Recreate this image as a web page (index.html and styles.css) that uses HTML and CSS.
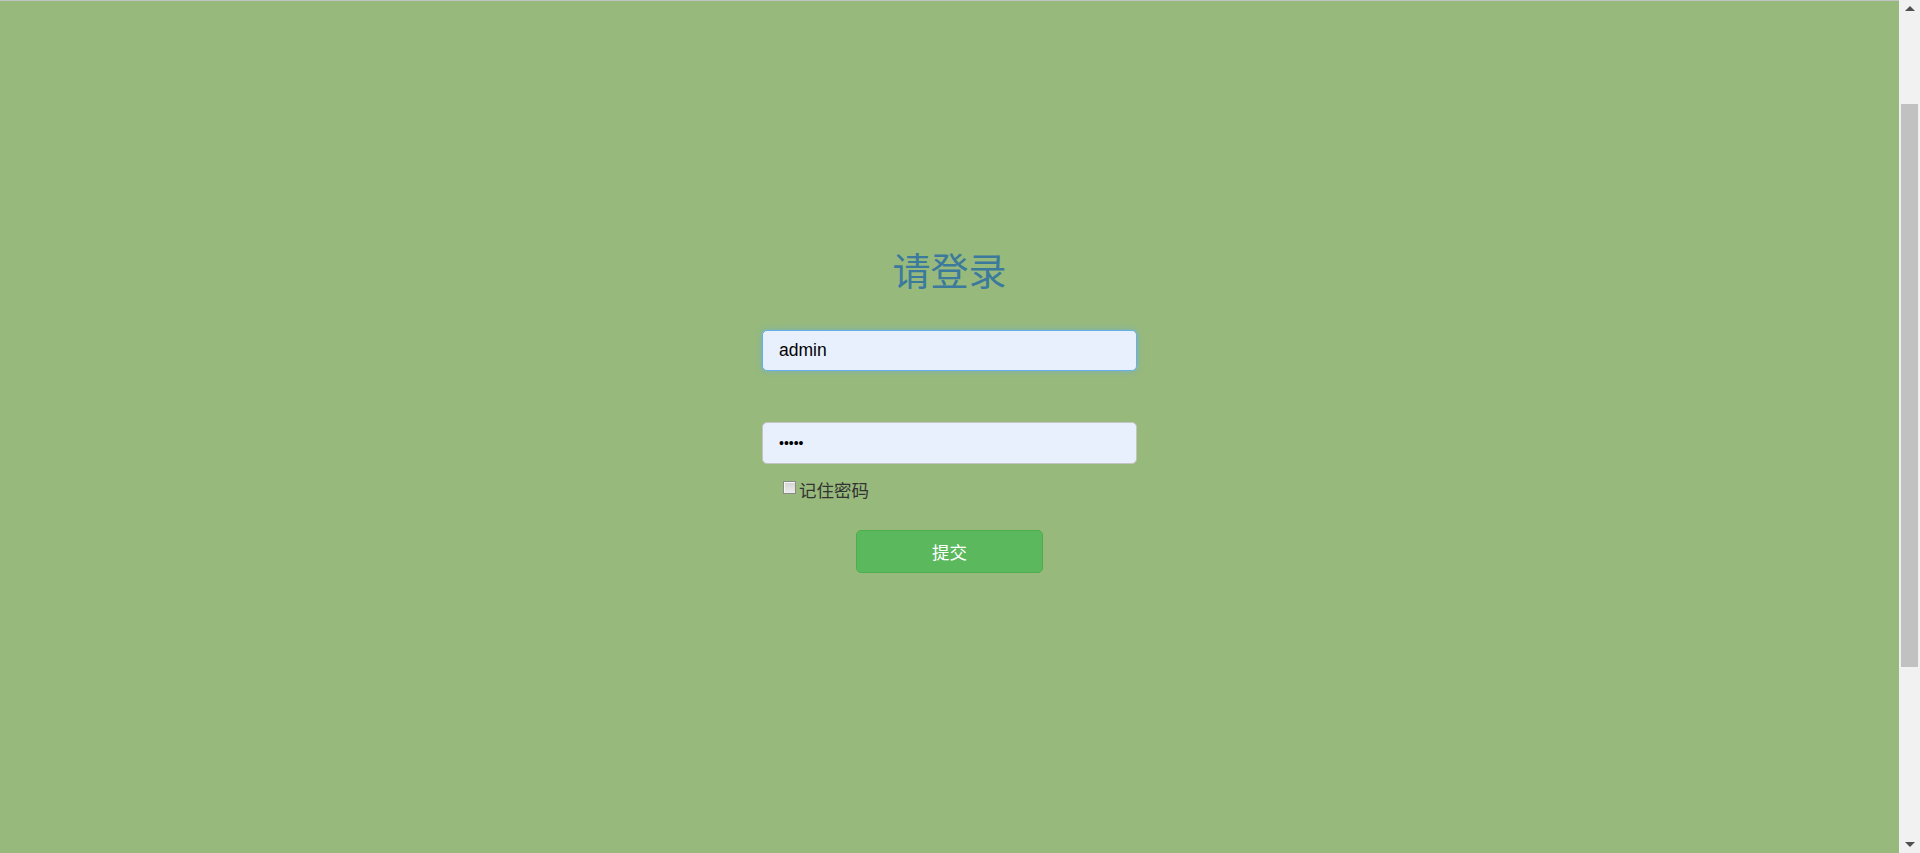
FILE: index.html
```html
<!DOCTYPE html>
<html lang="zh-CN">
<head>
<meta charset="utf-8">
<title>请登录</title>
<link rel="stylesheet" href="styles.css">
</head>
<body>
<div class="page">
  <main class="main">
    <form class="login">
      <h2 class="title">请登录</h2>
      <input class="field focused" type="text" value="admin">
      <input class="field pwd" type="password" value="12345">
      <label class="remember"><span class="box"></span>记住密码</label>
      <div class="actions"><button class="submit" type="button">提交</button></div>
    </form>
  </main>
  <div class="scrollbar">
    <div class="arrow up"></div>
    <div class="track"><div class="thumb"></div></div>
    <div class="arrow down"></div>
  </div>
</div>
</body>
</html>
```
FILE: styles.css
```css
html, body {
  margin: 0;
  padding: 0;
  height: 100%;
  overflow: hidden;
}
body {
  font-family: "Liberation Sans", "Noto Sans CJK SC", sans-serif;
  background: #97b97c;
}
.page {
  display: flex;
  height: 853px;
  box-sizing: border-box;
  border-top: 1px solid #c2c2c2;
}
.main {
  flex: 1;
  display: flex;
  justify-content: center;
}
.login {
  width: 375px;
  padding-top: 247px;
  display: flex;
  flex-direction: column;
}
.title {
  margin: 0;
  height: 42px;
  line-height: 42px;
  font-size: 38px;
  font-weight: normal;
  text-align: center;
  color: #3b7a9c;
  font-family: "Noto Sans CJK SC", sans-serif;
}
.field {
  box-sizing: border-box;
  width: 375px;
  height: 41px;
  margin: 0;
  padding: 0 16px;
  border: 1px solid #c4c4c4;
  border-radius: 5px;
  background: #e8f0fe;
  font-family: "Liberation Sans", sans-serif;
  font-size: 17.5px;
  color: #000;
  outline: none;
}
.focused {
  margin-top: 40px;
  border-color: #66afe9;
  box-shadow: 0 0 6px rgba(102, 175, 233, 0.6);
}
.pwd {
  margin-top: 51px;
  height: 42px;
  font-size: 14px;
}
.remember {
  display: flex;
  align-items: center;
  margin-top: 15px;
  padding-left: 21px;
  height: 20px;
  font-family: "Noto Sans CJK SC", sans-serif;
  font-size: 17.5px;
  color: #333;
}
.box {
  width: 11px;
  height: 11px;
  margin-top: -4px;
  margin-right: 3px;
  border: 1px solid #8a8a8a;
  background: linear-gradient(#d4d4d4, #ececec);
  box-shadow: inset 1px 1px 0 #f6f6f6;
}
.actions {
  display: flex;
  justify-content: center;
  margin-top: 31px;
}
.submit {
  width: 187px;
  height: 43px;
  border: 1px solid #4cae4c;
  border-radius: 5px;
  background: #5cb85c;
  color: #fff;
  font-family: "Noto Sans CJK SC", sans-serif;
  font-size: 17.5px;
  padding: 0;
}
.scrollbar {
  width: 21px;
  display: flex;
  flex-direction: column;
  background: #f1f1f1;
  margin-top: -1px;
}
.arrow {
  height: 17px;
  display: flex;
  justify-content: center;
  align-items: center;
}
.arrow.up::before {
  content: "";
  border-left: 5px solid transparent;
  border-right: 5px solid transparent;
  border-bottom: 5px solid #505050;
}
.arrow.down::before {
  content: "";
  border-left: 5px solid transparent;
  border-right: 5px solid transparent;
  border-top: 5px solid #505050;
}
.track {
  flex: 1;
  padding-top: 87px;
  padding-left: 2px;
}
.thumb {
  width: 17px;
  height: 563px;
  background: #c1c1c1;
}
```
